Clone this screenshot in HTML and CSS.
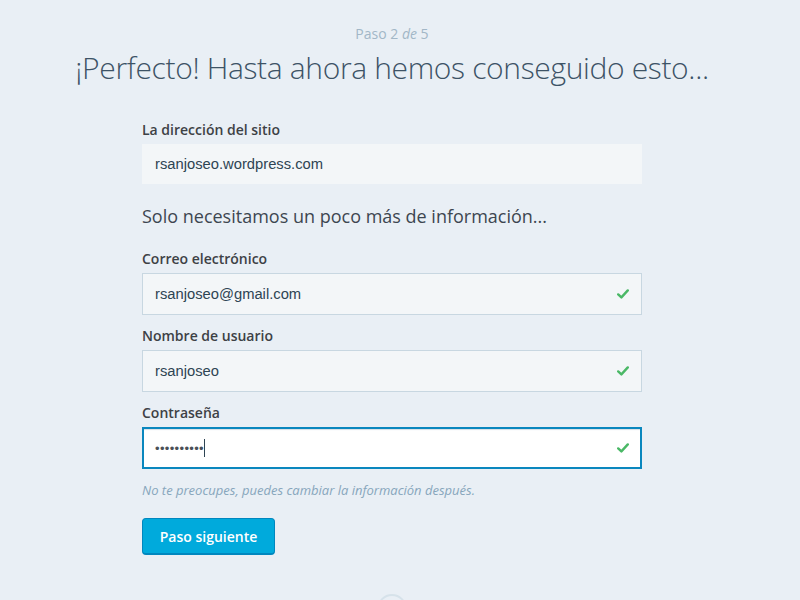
FILE: index.html
```html
<!DOCTYPE html>
<html lang="es">
<head>
<meta charset="utf-8">
<title>Paso 2 de 5</title>
<link rel="stylesheet" href="styles.css">
</head>
<body>
<div class="page">
  <div class="step">Paso 2 <em>de</em> 5</div>
  <h1 class="title">¡Perfecto! Hasta ahora hemos conseguido esto...</h1>
  <form class="form">
    <label class="label">La dirección del sitio</label>
    <div class="field field-static">rsanjoseo.wordpress.com</div>

    <h2 class="subtitle">Solo necesitamos un poco más de información...</h2>

    <label class="label label-next">Correo electrónico</label>
    <div class="field">
      <span class="value">rsanjoseo@gmail.com</span>
      <svg class="check" viewBox="0 0 12 10" width="12" height="10"><path d="M1.2 5.4 L4.4 8.4 L10.8 1.4" fill="none" stroke="#4ab866" stroke-width="2.4" stroke-linecap="round" stroke-linejoin="round"/></svg>
    </div>

    <label class="label label-row">Nombre de usuario</label>
    <div class="field">
      <span class="value">rsanjoseo</span>
      <svg class="check" viewBox="0 0 12 10" width="12" height="10"><path d="M1.2 5.4 L4.4 8.4 L10.8 1.4" fill="none" stroke="#4ab866" stroke-width="2.4" stroke-linecap="round" stroke-linejoin="round"/></svg>
    </div>

    <label class="label label-row">Contraseña</label>
    <div class="field field-focus">
      <span class="value dots">••••••••••</span><span class="caret"></span>
      <svg class="check" viewBox="0 0 12 10" width="12" height="10"><path d="M1.2 5.4 L4.4 8.4 L10.8 1.4" fill="none" stroke="#4ab866" stroke-width="2.4" stroke-linecap="round" stroke-linejoin="round"/></svg>
    </div>

    <p class="hint">No te preocupes, puedes cambiar la información después.</p>

    <button type="button" class="button">Paso siguiente</button>
  </form>
  <div class="spinner"></div>
</div>
</body>
</html>
```

FILE: styles.css
```css
html, body {
  margin: 0;
  padding: 0;
  background: #e9eff5;
  overflow: hidden;
}

body {
  font-family: "Open Sans", "Noto Sans", sans-serif;
  color: #3d4650;
}

.page {
  width: 784px;
  padding-top: 24px;
  display: flex;
  flex-direction: column;
  align-items: center;
}

.step {
  font-size: 14px;
  line-height: 20px;
  color: #a2b7c7;
}

.step em {
  font-style: italic;
}

.title {
  margin: 4px 0 0;
  font-size: 30px;
  font-weight: 300;
  line-height: 40px;
  color: #3d5366;
  letter-spacing: -0.35px;
}

.form {
  width: 500px;
  margin-top: 32px;
  display: flex;
  flex-direction: column;
  align-items: flex-start;
}

.label {
  display: block;
  font-size: 14px;
  font-weight: 600;
  line-height: 20px;
  color: #3d4145;
  margin-bottom: 4px;
}

.label-next {
  margin-top: 21px;
}

.label-row {
  margin-top: 11px;
}

.field {
  box-sizing: border-box;
  width: 500px;
  height: 42px;
  display: flex;
  align-items: center;
  padding: 0 12px 0 12px;
  background: #f3f6f8;
  border: 1px solid #c8d7e1;
  font-family: "Liberation Sans", Arial, sans-serif;
  font-size: 14.75px;
  color: #2e4453;
}

.field-static {
  height: 40px;
  border: none;
  padding-left: 13px;
}

.value {
  flex: 0 0 auto;
}

.check {
  margin-left: auto;
  margin-right: 0;
}

.field-focus {
  background: #ffffff;
  border: 2px solid #0a87be;
  box-shadow: inset 0 2px 1px -1px #d8e0e6;
  padding-left: 11px;
  padding-right: 11px;
}

.dots {
  font-size: 13px;
  letter-spacing: 0.35px;
  color: #4a5057;
}

.caret {
  display: inline-block;
  width: 1px;
  height: 18px;
  margin-left: 0;
  background: #2e4453;
}

.subtitle {
  margin: 20px 0 0;
  font-size: 18px;
  font-weight: 400;
  line-height: 24px;
  color: #3d4650;
}

.hint {
  margin: 12px 0 0;
  font-size: 13px;
  font-style: italic;
  line-height: 18px;
  color: #87a6bc;
}

.button {
  margin-top: 19px;
  box-sizing: border-box;
  width: 133px;
  height: 37px;
  background: #00aadc;
  border: 1px solid #0087be;
  border-bottom-width: 2px;
  border-radius: 4px;
  color: #ffffff;
  font-family: "Open Sans", "Noto Sans", sans-serif;
  font-size: 14px;
  font-weight: 600;
  padding: 0;
}

.spinner {
  margin-top: 39px;
  width: 30px;
  height: 30px;
  box-sizing: border-box;
  border: 2px solid #d6e2ea;
  border-radius: 50%;
}
```
